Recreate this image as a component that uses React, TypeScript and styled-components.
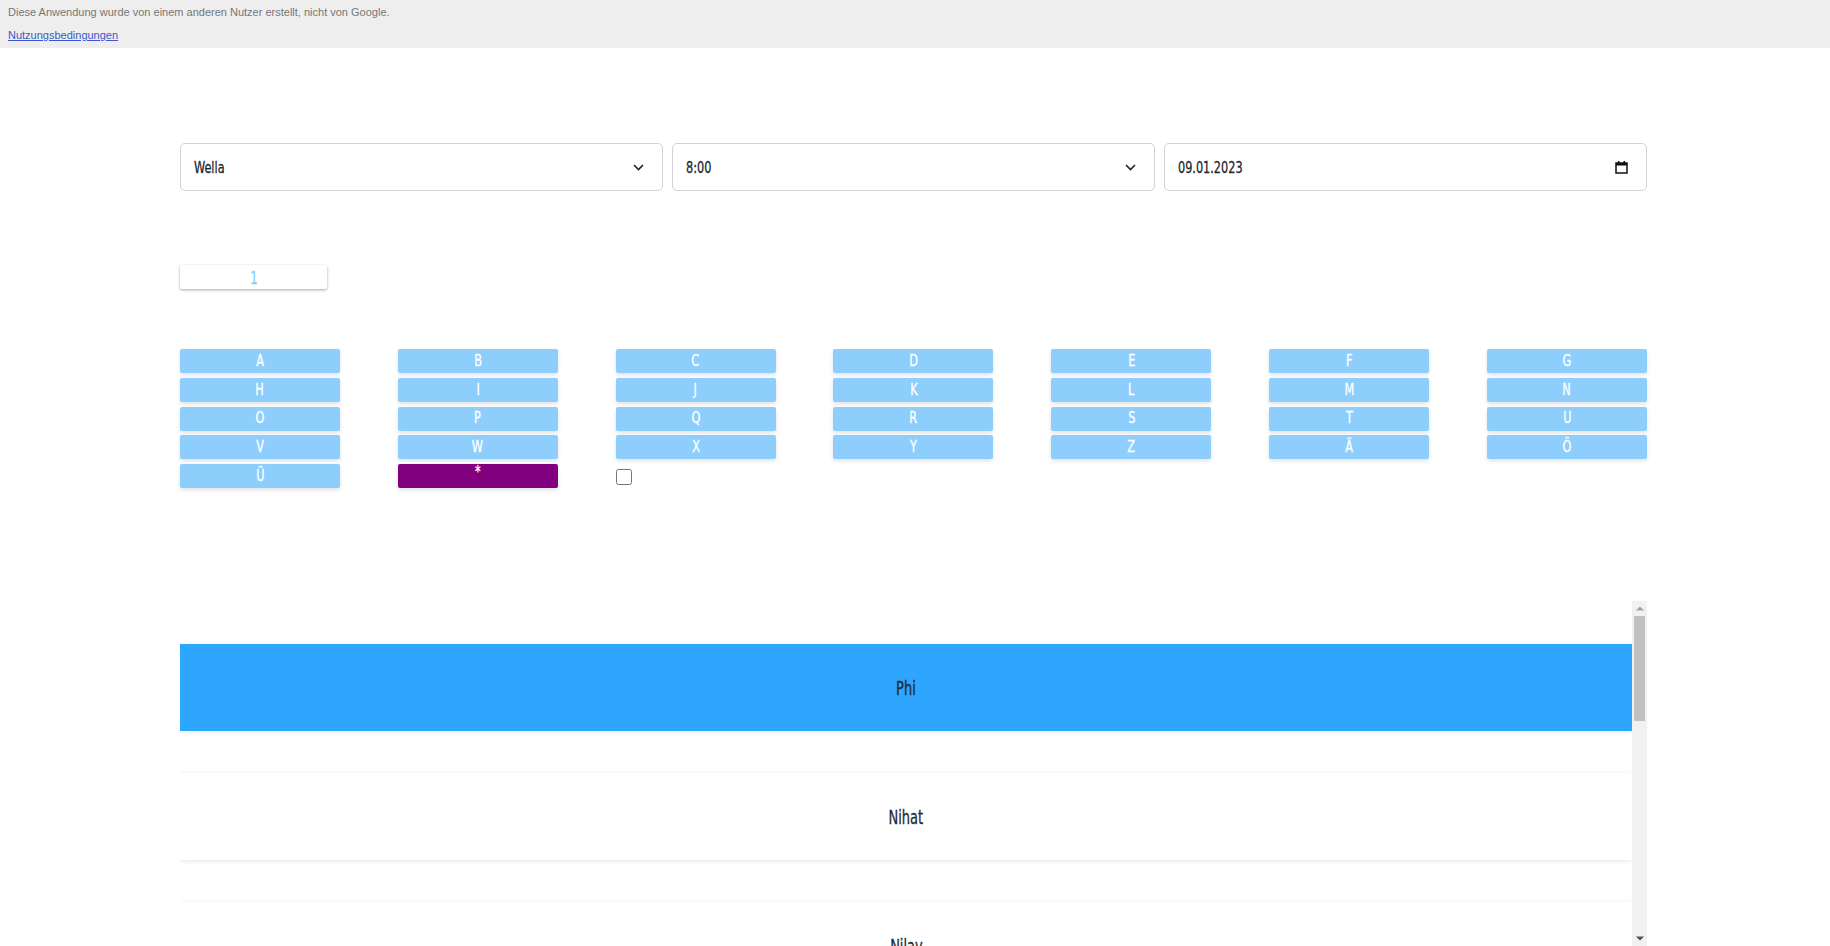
import React from "react";
import styled, { createGlobalStyle } from "styled-components";

const Global = createGlobalStyle`
  html, body { margin: 0; padding: 0; background: #fff; overflow: hidden; }
  body { font-family: "DejaVu Sans Condensed", "Liberation Sans", sans-serif; }
`;

const COND = `"DejaVu Sans Condensed", "Liberation Sans", sans-serif`;

const Banner = styled.div`
  height: 48px;
  box-sizing: border-box;
  background: #eeeeee;
  padding: 6px 8px 0;
  font-family: "Liberation Sans", Arial, sans-serif;
  font-size: 11px;
  color: #777;
  display: flex;
  flex-direction: column;
  align-items: flex-start;
  gap: 11px;
`;

const BannerLink = styled.a`
  color: #3b58c8;
  text-decoration: underline;
  cursor: pointer;
`;

const Main = styled.div`
  width: 1467px;
  margin-left: 180px;
  padding-top: 95px;
  display: flex;
  flex-direction: column;
`;

const Controls = styled.div`
  display: grid;
  grid-template-columns: 1fr 1fr 1fr;
  gap: 9px;
`;

const Field = styled.div`
  height: 48px;
  box-sizing: border-box;
  border: 1px solid #cfd2d6;
  border-radius: 5px;
  display: flex;
  align-items: center;
  justify-content: space-between;
  padding: 0 18px 0 13px;
  font-family: ${COND};
  font-size: 16.5px;
  color: #1b2630;
`;

const Narrow = styled.span<{ $origin?: string }>`
  display: inline-block;
  transform: scaleX(0.76);
  transform-origin: ${(p) => p.$origin || "center"};
  white-space: nowrap;
  -webkit-text-stroke: 0.3px currentColor;
`;

const Pager = styled.div`
  margin-top: 74px;
  display: flex;
`;

const PageButton = styled.div`
  width: 147px;
  height: 24px;
  padding-top: 2px;
  box-sizing: border-box;
  background: #fff;
  border-radius: 2px;
  box-shadow: 0 1px 3px rgba(0, 0, 0, 0.35);
  color: #87cefa;
  font-family: ${COND};
  font-size: 17px;
  display: flex;
  align-items: center;
  justify-content: center;
`;

const Letters = styled.div`
  margin-top: 60px;
  display: grid;
  grid-template-columns: repeat(7, 160px);
  justify-content: space-between;
  row-gap: 4.75px;
`;

const LetterButton = styled.div<{ $active?: boolean }>`
  height: 24px;
  border-radius: 2px;
  background: ${(p) => (p.$active ? "#800080" : "#8dcefd")};
  box-shadow: 0 2px 4px rgba(0, 0, 0, 0.12);
  color: #fff;
  font-family: ${COND};
  font-size: 16.5px;
  display: flex;
  align-items: ${(p) => (p.$active ? "flex-start" : "center")};
  justify-content: center;
  line-height: 1;
`;

const CheckCell = styled.div`
  display: flex;
  align-items: flex-start;
  padding-top: 5px;
`;

const Check = styled.input`
  width: 16px;
  height: 16px;
  margin: 0;
`;

const ScrollArea = styled.div`
  margin-top: 113px;
  height: 345px;
  display: flex;
`;

const Viewport = styled.div`
  flex: 1;
  overflow: hidden;
  box-sizing: border-box;
  padding-top: 43px;
  display: flex;
  flex-direction: column;
  gap: 42px;
`;

const Item = styled.div<{ $selected?: boolean }>`
  flex: 0 0 87px;
  background: ${(p) => (p.$selected ? "#2ea6fe" : "#fff")};
  box-shadow: 0 1px 5px rgba(0, 0, 0, 0.1);
  display: flex;
  align-items: center;
  justify-content: center;
  font-family: ${COND};
  font-size: 19px;
  color: #1e2a33;
`;

const Scrollbar = styled.div`
  width: 15px;
  background: #f1f1f1;
  display: flex;
  flex-direction: column;
`;

const ArrowButton = styled.div`
  height: 15px;
  display: flex;
  align-items: center;
  justify-content: center;
`;

const Track = styled.div`
  flex: 1;
  padding: 0 2px;
`;

const Thumb = styled.div`
  height: 105px;
  background: #c1c1c1;
`;

const Chevron = () => (
  <svg width="11" height="7" viewBox="0 0 11 7">
    <path d="M1 1 L5.5 5.5 L10 1" fill="none" stroke="#222" strokeWidth="1.6" />
  </svg>
);

const Calendar = () => (
  <svg width="13" height="13" viewBox="0 0 13 13">
    <rect x="1" y="2" width="11" height="10" fill="none" stroke="#111" strokeWidth="1.5" />
    <rect x="1" y="2" width="11" height="2.5" fill="#111" />
    <rect x="3" y="0" width="1.5" height="2.5" fill="#111" />
    <rect x="8.5" y="0" width="1.5" height="2.5" fill="#111" />
  </svg>
);

const Triangle = ({ up, color }: { up?: boolean; color: string }) => (
  <svg width="8" height="5" viewBox="0 0 8 5">
    <path d={up ? "M0 4.5 L4 0.5 L8 4.5 Z" : "M0 0.5 L8 0.5 L4 4.5 Z"} fill={color} />
  </svg>
);

const letters = [
  "A","B","C","D","E","F","G",
  "H","I","J","K","L","M","N",
  "O","P","Q","R","S","T","U",
  "V","W","X","Y","Z","Ä","Ö",
];

const names = ["Phi", "Nihat", "Nilay", "Nina", "Noah", "Olga", "Paul", "Petra"];

export default function App() {
  return (
    <>
      <Global />
      <Banner>
        <span>Diese Anwendung wurde von einem anderen Nutzer erstellt, nicht von Google.</span>
        <BannerLink>Nutzungsbedingungen</BannerLink>
      </Banner>
      <Main>
        <Controls>
          <Field><Narrow $origin="left">Wella</Narrow><Chevron /></Field>
          <Field><Narrow $origin="left">8:00</Narrow><Chevron /></Field>
          <Field><Narrow $origin="left">09.01.2023</Narrow><Calendar /></Field>
        </Controls>
        <Pager>
          <PageButton><Narrow>1</Narrow></PageButton>
        </Pager>
        <Letters>
          {letters.map((l) => (
            <LetterButton key={l}><Narrow>{l}</Narrow></LetterButton>
          ))}
          <LetterButton><Narrow>Ü</Narrow></LetterButton>
          <LetterButton $active><Narrow>*</Narrow></LetterButton>
          <CheckCell>
            <Check type="checkbox" />
          </CheckCell>
        </Letters>
        <ScrollArea>
          <Viewport>
            {names.map((n, i) => (
              <Item key={n} $selected={i === 0}><Narrow>{n}</Narrow></Item>
            ))}
          </Viewport>
          <Scrollbar>
            <ArrowButton><Triangle up color="#a3a3a3" /></ArrowButton>
            <Track><Thumb /></Track>
            <ArrowButton><Triangle color="#505050" /></ArrowButton>
          </Scrollbar>
        </ScrollArea>
      </Main>
    </>
  );
}
